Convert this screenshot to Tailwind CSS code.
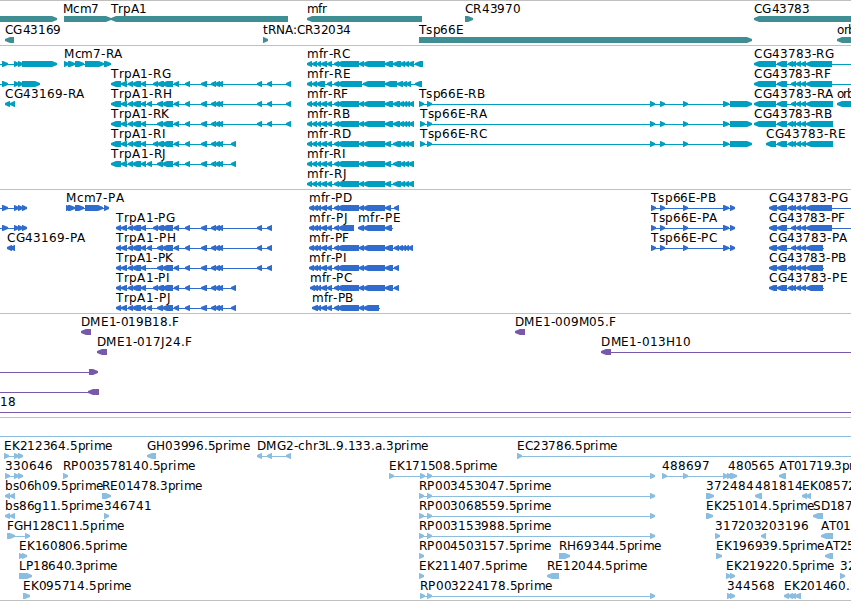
<!DOCTYPE html>
<html lang="en">
<head>
    <meta charset="UTF-8">
    <meta name="viewport" content="width=device-width, initial-scale=1.0">
    <title>Genome Browser - 3L</title>
    <script src="https://cdn.jsdelivr.net/npm/@tailwindcss/browser@4"></script>
</head>
<body class="bg-white overflow-hidden">
    <main class="flex flex-col w-[851px] h-[601px] border-b border-[#c0c0c0] font-['DejaVu_Sans',sans-serif] text-[12px] text-black">
        <!-- Genes -->
        <section class="h-[45px] border-t border-[#c0c0c0]">
            <svg id="genes" class="block w-full h-full fill-[#3f8e94]" viewBox="0 1 851 44"></svg>
        </section>
        <!-- Transcripts -->
        <section class="h-[144px] border-t border-[#c0c0c0]">
            <svg id="transcripts" class="block w-full h-full fill-[#009fc1]" viewBox="0 46 851 143"></svg>
        </section>
        <!-- Proteins -->
        <section class="h-[124px] border-t border-[#c0c0c0]">
            <svg id="proteins" class="block w-full h-full fill-[#306cce]" viewBox="0 190 851 123"></svg>
        </section>
        <!-- BAC ends -->
        <section class="h-[104px] border-t border-[#c0c0c0]">
            <svg id="bacs" class="block w-full h-full fill-[#7858a8]" viewBox="0 314 851 103"></svg>
        </section>
        <!-- ESTs -->
        <section class="h-[183px] border-t border-[#c0c0c0]">
            <svg id="ests" class="block w-full h-full fill-[#8abde0]" viewBox="0 418 851 182"></svg>
        </section>
    </main>

    <script>
        const ctx = document.createElement('canvas').getContext('2d');
        ctx.font = '12px "DejaVu Sans"';
        ctx.fontKerning = 'none';

        // Label from x to end, each glyph on a whole pixel
        function label(text, x, end, y) {
            const m = ctx.measureText(text);
            const ink = m.actualBoundingBoxRight + m.actualBoundingBoxLeft;
            const gap = end ? (end - 0.6 - x - ink) / (text.length - 1) : 0.15;
            // round letters and T start one pixel early
            const start = Math.round(x + m.actualBoundingBoxLeft) - (/^[TCGo02-9]/.test(text) ? 1 : 0);
            const xs = [...text].map((c, i) =>
                start + Math.round(ctx.measureText(text.slice(0, i)).width + gap * i));
            return `<text class="fill-black" x="${xs.join(' ')}" y="${y}">${text}</text>`;
        }

        // One exon, 6px high, with the arrow head on its leading side
        function exon(dir, a, b, y) {
            const h = Math.min(5, b - a - 0.5);
            return dir === '<'
                ? `<path d="M${a} ${y + 2}L${a + h} ${y}H${b}V${y + 6}H${a + h}L${a} ${y + 4}Z"/>`
                : `<path d="M${b} ${y + 2}L${b - h} ${y}H${a}V${y + 6}H${b - h}L${b} ${y + 4}Z"/>`;
        }

        // row: [y, direction, exons, [text, x, end], line start, line end]
        function draw(id, rows) {
            document.getElementById(id).innerHTML = rows.map(([y, dir, ex, name, from, to]) => {
                const a = from ?? (ex.length ? ex[0][0] + 2 : 0);
                const b = to ?? (ex.length ? ex[ex.length - 1][1] - 2 : 851);
                return `<g><rect x="${a}" y="${y + 3}" width="${b - a}" height="1"/>`
                    + ex.map(e => exon(dir, e[0], e[1], y)).join('') + '</g>'
                    + (name ? label(name[0], name[1], name[2], y - 3) : '');
            }).join('');
        }

        draw('genes', [
            [16, '>', [[-10, 57]]],
            [16, '>', [[64, 111]], ['Mcm7', 64, 98.8]],
            [16, '<', [[111, 288]], ['TrpA1', 111, 147.5]],
            [16, '<', [[307, 422]], ['mfr', 307.5, 327.5]],
            [16, '>', [[465, 473]], ['CR43970', 465.5, 520.8]],
            [16, '<', [[754, 860]], ['CG43783', 754.5, 810]],
            [37, '<', [[5, 14]], ['CG43169', 5.5, 61.5]],
            [37, '>', [[263, 268]], ['tRNA:CR32034', 263, 351]],
            [37, '>', [[419, 752]], ['Tsp66E', 419, 464.5]],
            [37, '<', [[837, 860]], ['orb', 837.5, 855.8]],
        ]);

        const trpTail = [[174, 179], [185, 190], [201, 207], [211, 216], [215, 220], [218, 223]];
        const trpG = [[121, 127], [128, 133], [132, 141], [141, 146], [153, 158], [157, 164], [162, 173], ...trpTail];
        const trpH = [[121, 127], [128, 133], [132, 141], [141, 146], [147, 152], [157, 163], [162, 173], ...trpTail];
        const trpK = [[121, 127], [128, 133], [132, 141], [141, 146], [157, 163], [162, 173], ...trpTail];
        const trpEnd = [[257, 262], [267, 272]];

        const mfr = [[312, 317], [317, 321], [321, 327], [327, 332], [334, 339], [337, 359], [359, 364], [363, 385]];
        const mfrC = [[307, 312], ...mfr, [385, 393], [393, 401], [400, 405], [404, 409], [408, 414], [415, 423]];
        const mfrE = [[307, 312], [312, 317], [316, 325], [327, 332], [334, 339], [337, 362], [363, 385], [385, 397], [397, 403], [402, 407], [406, 411], [415, 422]];
        const mfrF = [[307, 312], ...mfr, [385, 393], [393, 400], [399, 404], [403, 407], [406, 410], [409, 414]];
        const mfrD = [[307, 312], ...mfr, [385, 391], [393, 401], [400, 405], [404, 409], [408, 414]];

        const tsp = [[650, 655], [660, 665], [683, 688], [723, 729], [730, 752]];
        const cgMid = [[791, 796], [796, 801], [801, 806]];

        draw('transcripts', [
            [61, '>', [[2, 8], [14, 19], [18, 23], [22, 57]], null, 0],
            [81, '>', [[2, 8], [14, 19], [18, 23], [22, 40]], null, 0],
            [101, '<', [[5, 10], [10, 15]], ['CG43169-RA', 5.5, 86.5]],
            [61, '>', [[64, 69], [68, 75], [75, 84], [85, 104], [104, 111]], ['Mcm7-RA', 64.5, 123.5]],
            [81, '<', [[111, 121], ...trpG, ...trpEnd, [286, 291]], ['TrpA1-RG', 111, 172.1]],
            [101, '<', [[111, 121], ...trpH, ...trpEnd, [286, 291]], ['TrpA1-RH', 111, 172.1]],
            [121, '<', [[111, 121], ...trpK, ...trpEnd, [286, 291]], ['TrpA1-RK', 111, 171.9]],
            [141, '<', [[111, 121], ...trpG, [231, 236]], ['TrpA1-RI', 111, 166.1]],
            [161, '<', [[111, 121], ...trpH, [231, 236]], ['TrpA1-RJ', 111, 166.9]],
            [61, '<', mfrC, ['mfr-RC', 307.5, 349.9]],
            [81, '<', mfrE, ['mfr-RE', 307.5, 349.9]],
            [101, '<', mfrF, ['mfr-RF', 307.5, 348.1]],
            [121, '<', mfrF, ['mfr-RB', 307.5, 349.6]],
            [141, '<', mfrD, ['mfr-RD', 307.5, 350.9]],
            [161, '<', mfrD, ['mfr-RI', 307.5, 345.1]],
            [181, '<', mfrD, ['mfr-RJ', 307.5, 345.6]],
            [101, '>', [[419, 424], [427, 432], ...tsp], ['Tsp66E-RB', 419, 486.1]],
            [121, '>', [[420, 425], [427, 432], ...tsp], ['Tsp66E-RA', 420, 489.6]],
            [141, '>', [[420, 425], [427, 432], ...tsp], ['Tsp66E-RC', 420, 488.1]],
            [61, '<', [[754, 776], [777, 787], [788, 793], ...cgMid, [806, 832]], ['CG43783-RG', 754.5, 835.1], 756, 851],
            [81, '<', [[754, 776], [777, 787], ...cgMid, [806, 832]], ['CG43783-RF', 754.5, 832.1], 756, 851],
            [101, '<', [[754, 776], [777, 787], ...cgMid, [806, 833]], ['CG43783-RA', 754.5, 835.4]],
            [121, '<', [[754, 776], [777, 787], [788, 793], ...cgMid, [806, 833]], ['CG43783-RB', 754.5, 833.1]],
            [141, '<', [[766, 776], [777, 787], [788, 793], ...cgMid, [806, 833]], ['CG43783-RE', 766.5, 845.6]],
            [101, '<', [[837, 860]], ['orb-RA', 837.5, 874.8]],
        ]);

        const mfrP = [[317, 321], [321, 327], [327, 332], [334, 339], [337, 359], [359, 364]];
        const tspP = [[651, 656], [660, 665], [683, 688], [723, 729], [730, 735]];

        draw('proteins', [
            [205, '>', [[2, 8], [14, 19], [18, 23], [22, 27]], null, 0],
            [225, '>', [[2, 8], [14, 19], [18, 23], [22, 27]], null, 0],
            [245, '<', [[7, 12], [10, 15]], ['CG43169-PA', 7.5, 87.4]],
            [205, '>', [[66, 71], [68, 75], [75, 84], [85, 103], [104, 109]], ['Mcm7-PA', 66.5, 124.6]],
            [225, '<', [[116, 121], ...trpG, ...trpEnd], ['TrpA1-PG', 116, 176.4]],
            [245, '<', [[116, 121], ...trpH, ...trpEnd], ['TrpA1-PH', 116, 176.4]],
            [265, '<', [[116, 121], ...trpK, ...trpEnd], ['TrpA1-PK', 116, 175.9]],
            [285, '<', [[116, 121], ...trpG, [231, 236]], ['TrpA1-PI', 116, 170.4]],
            [305, '<', [[116, 121], ...trpH, [231, 236]], ['TrpA1-PJ', 116, 171.4]],
            [205, '<', [[309, 314], [313, 318], ...mfrP, [363, 385], [385, 391], [394, 399]], ['mfr-PD', 309.5, 351.9]],
            [225, '<', [[309, 314], [313, 318], [317, 321], [321, 327], [327, 332], [334, 339], [338, 354]], ['mfr-PJ', 309.5, 347.1]],
            [225, '<', [[358, 364], [363, 385], [385, 392]], ['mfr-PE', 358.5, 399.6], 360, 393],
            [245, '<', [[309, 314], [313, 318], ...mfrP, [363, 385], [385, 393], [394, 399], [398, 403], [402, 406], [405, 409], [408, 413]], ['mfr-PF', 309.5, 349.1]],
            [265, '<', [[309, 314], [313, 318], ...mfrP, [363, 385], [385, 393], [394, 399]], ['mfr-PI', 309.5, 346.1]],
            [285, '<', [[310, 315], [313, 318], ...mfrP, [363, 385], [385, 393], [394, 399]], ['mfr-PC', 310.5, 351.9]],
            [305, '<', [[312, 318], ...mfrP, [363, 379]], ['mfr-PB', 312.5, 353.1], 314, 380],
            [205, '>', tspP, ['Tsp66E-PB', 651, 717.4]],
            [225, '>', tspP, ['Tsp66E-PA', 651, 719.9]],
            [245, '>', tspP, ['Tsp66E-PC', 651, 718.4]],
            [205, '<', [[769, 777], [777, 787], [788, 793], ...cgMid, [806, 832]], ['CG43783-PG', 769.5, 849.1], 771, 851],
            [225, '<', [[769, 777], [777, 787], ...cgMid, [806, 832]], ['CG43783-PF', 769.5, 846.1], 771, 851],
            [245, '<', [[769, 777], [777, 787], ...cgMid, [806, 823]], ['CG43783-PA', 769.5, 849.4], 771, 824],
            [265, '<', [[769, 777], [777, 787], [788, 793], ...cgMid, [806, 823]], ['CG43783-PB', 769.5, 847.1], 771, 824],
            [285, '<', [[769, 777], [777, 787], [788, 793], ...cgMid, [806, 823]], ['CG43783-PE', 769.5, 847.6], 771, 824],
        ]);

        draw('bacs', [
            [329, '<', [[81, 91]], ['DME1-019B18.F', 81.5, 178.8]],
            [349, '<', [[97, 107]], ['DME1-017J24.F', 97.5, 191.8]],
            [369, '>', [[89, 98]], null, 0],
            [389, '<', [[88, 99]], null, 0],
            [409, '>', [], ['18', 0.5, 15.1]],
            [329, '<', [[515, 525]], ['DME1-009M05.F', 515.5, 615.8]],
            [349, '<', [[601, 611]], ['DME1-013H10', 601.5, 690.5], 603, 851],
        ]);

        const spliced = [[419, 424], [427, 432], [650, 655]];
        const splicedLate = [[420, 425], [427, 432], [650, 655]];

        draw('ests', [
            [433, '>', []],
            [453, '>', [[4, 9], [14, 19], [18, 23]], ['EK212364.5prime', 4.5, 112.5]],
            [453, '<', [[147, 156]], ['GH03996.5prime', 147.5, 251]],
            [453, '<', [[257, 262], [267, 272], [286, 291]], ['DMG2-chr3L.9.133.a.3prime', 257.5, 428.5]],
            [453, '>', [[517, 522]], ['EC23786.5prime', 517.5, 617.5], 517, 851],
            [473, '>', [[5, 10], [14, 19], [18, 23]], ['330646', 5.5, 53]],
            [473, '>', [[63, 68]], ['RP003578140.5prime', 63.5, 195.5]],
            [473, '>', [[389, 394], ...splicedLate], ['EK171508.5prime', 389.5, 497.5]],
            [473, '>', [[662, 667], [683, 688], [723, 728], [727, 732], [730, 737]], ['488697', 662.5, 709.9]],
            [473, '>', [], ['480565', 728.5, 775.1], 728, 729],
            [473, '<', [[779, 786]], ['AT01719.3prime', 779, 876]],
            [493, '<', [[5, 10], [10, 15]], ['bs06h09.5prime', 5.5, 103.5]],
            [493, '>', [[102, 111]], ['RE01478.3prime', 102.5, 202.5]],
            [493, '>', spliced, ['RP003453047.5prime', 419.5, 551.5]],
            [493, '>', [[706, 714]], ['372484', 706.5, 754.1]],
            [493, '<', [[755, 762]], ['481814', 755.5, 802.6]],
            [493, '<', [[802, 807], [806, 811]], ['EK085721.5prime', 802.5, 910.5]],
            [513, '<', [[5, 10], [10, 15]], ['bs86g11.5prime', 5.5, 103.5]],
            [513, '>', [[104, 109]], ['346741', 104.5, 152]],
            [513, '>', spliced, ['RP003068559.5prime', 419.5, 551.5]],
            [513, '>', [[706, 713]], ['EK251014.5prime', 706.5, 814.5]],
            [513, '<', [[813, 823]], ['SD18780.3prime', 812.5, 913]],
            [533, '>', [[7, 15], [25, 30]], ['FGH128C11.5prime', 7.5, 124.5]],
            [533, '>', spliced, ['RP003153988.5prime', 419.5, 551.5]],
            [533, '>', [[715, 720]], ['317203', 715.5, 762.1]],
            [533, '<', [[761, 766]], ['203196', 761.5, 809.1]],
            [533, '<', [[821, 833]], ['AT01380.5prime', 821, 918]],
            [553, '>', [[19, 24], [22, 27]], ['EK160806.5prime', 19.5, 127.5]],
            [553, '>', [[419, 424]], ['RP004503157.5prime', 419.5, 551.5]],
            [553, '>', [[559, 570]], ['RH69344.5prime', 559.5, 661.5]],
            [553, '>', [[716, 722]], ['EK196939.5prime', 716.5, 824.5]],
            [553, '<', [[825, 833]], ['AT25830.5prime', 825, 922]],
            [573, '>', [[19, 32]], ['LP18640.3prime', 19.5, 117.5]],
            [573, '>', [[419, 424]], ['EK211407.5prime', 419.5, 527.5]],
            [573, '<', [[547, 559]], ['RE12044.5prime', 547.5, 647.5]],
            [573, '>', [[726, 731], [730, 735]], ['EK219220.5prime', 726.5, 834.5]],
            [573, '>', [[840, 845]], ['328160', 840.5, 887]],
            [593, '>', [[23, 30]], ['EK095714.5prime', 23.5, 131.5]],
            [593, '>', splicedLate, ['RP003224178.5prime', 420.5, 552.5]],
            [593, '>', [[727, 732], [730, 735]], ['344568', 727.5, 775.1]],
            [593, '<', [[784, 789], [788, 793], [791, 796], [795, 801]], ['EK201460.5prime', 784.5, 892.5]],
        ]);
    </script>
</body>
</html>
